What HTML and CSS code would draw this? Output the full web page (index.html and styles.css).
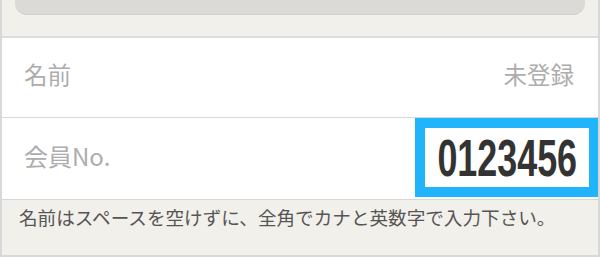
FILE: index.html
```html
<!DOCTYPE html>
<html lang="ja">
<head>
<meta charset="utf-8">
<link rel="stylesheet" href="styles.css">
</head>
<body>
<div class="frame">
  <div class="top"><div class="card"></div></div>
  <div class="row row-name">
    <span class="label">名前</span>
    <span class="value">未登録</span>
  </div>
  <div class="row row-member">
    <span class="label">会員No.</span>
    <div class="number-box"><span class="number">0123456</span></div>
  </div>
  <div class="note">名前はスペースを空けずに、全角でカナと英数字で入力下さい。</div>
</div>
</body>
</html>
```
FILE: styles.css
```css
html, body {
  margin: 0;
  padding: 0;
  background: #ffffff;
}
.frame {
  width: 600px;
  height: 257px;
  box-sizing: border-box;
  border-left: 2px solid #d8d8d8;
  border-right: 2px solid #d8d8d8;
  border-bottom: 2px solid #d8d8d8;
  font-family: "Noto Sans CJK JP", "Noto Sans", sans-serif;
  overflow: hidden;
}
.top {
  height: 36px;
  background: #f2f0eb;
  border-bottom: 2px solid #dfddd9;
  padding: 0 13px;
}
.card {
  height: 14px;
  background: #dcdad6;
  border-bottom: 1px solid #d2d0cc;
  border-radius: 0 0 12px 12px;
}
.row {
  display: flex;
  align-items: center;
  justify-content: space-between;
  border-bottom: 1px solid #d6d6d6;
  padding-left: 22px;
  box-sizing: border-box;
}
.row-name {
  height: 80px;
  padding-right: 24px;
  padding-bottom: 6px;
}
.row-member {
  height: 82px;
  align-items: flex-start;
}
.label, .value {
  font-size: 23.5px;
  color: #adadad;
  line-height: 1;
}
.row-member .label {
  margin-top: 26px;
  font-size: 24px;
}
.number-box {
  width: 184px;
  height: 79px;
  box-sizing: border-box;
  border: 10px solid #20b4fb;
  background: #fff;
  display: flex;
  align-items: center;
  justify-content: center;
  margin-right: -1px;
}
.number {
  display: inline-block;
  font-family: "Liberation Sans", Arial, sans-serif;
  font-weight: bold;
  font-size: 52px;
  line-height: 1;
  color: #333333;
  transform: scaleX(0.69);
  letter-spacing: 0;
}
.note {
  background: #f2f0eb;
  height: 55px;
  box-sizing: border-box;
  padding: 5px 0 0 17px;
  font-size: 18.6px;
  color: #555555;
  line-height: 24px;
  white-space: nowrap;
}
```
